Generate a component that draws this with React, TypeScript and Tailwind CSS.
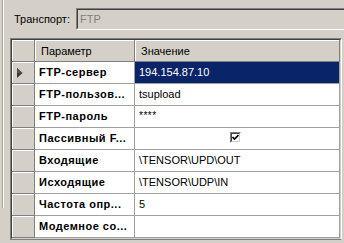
import React from "react";

type Row = { name: string; value?: string; selected?: boolean; check?: boolean; small?: boolean };

const rows: Row[] = [
  { name: "FTP-сервер", value: "194.154.87.10", selected: true },
  { name: "FTP-пользов...", value: "tsupload" },
  { name: "FTP-пароль", value: "****", small: true },
  { name: "Пассивный F...", check: true },
  { name: "Входящие", value: "\\TENSOR\\UPD\\OUT" },
  { name: "Исходящие", value: "\\TENSOR\\UDP\\IN" },
  { name: "Частота опр...", value: "5" },
  { name: "Модемное со...", value: "" },
];

function Arrow() {
  return (
    <svg width="6" height="10" viewBox="0 0 6 10">
      <polygon points="0,0 5.5,5 0,10" fill="#3a3a3a" />
      <polygon points="0,0 5.5,5 0,5" fill="#555" />
    </svg>
  );
}

function CheckBox() {
  return (
    <div className="w-[11px] h-[11px] border border-[#808080] border-b-white border-r-white -mt-[3px]">
      <div className="w-full h-full border border-[#404040] border-b-[#d4d0c8] border-r-[#d4d0c8] bg-white flex items-center justify-center">
        <svg width="7" height="7" viewBox="0 0 7 7">
          <path d="M0.5 3 L2.5 5 L6.5 1" stroke="#000" strokeWidth="1.6" fill="none" />
        </svg>
      </div>
    </div>
  );
}

export default function App() {
  return (
    <div className="relative w-[344px] h-[243px] bg-[#d4d0c8] overflow-hidden font-['Liberation_Sans',Arial,sans-serif] text-[11px] text-black">
      <div className="absolute left-[2px] top-0 h-[208px] w-[2px] border-l border-l-[#a8a5a0] border-r border-r-white" />
      <div className="flex items-center pt-[8px] pl-[14px]">
        <span className="w-[62px] shrink-0 leading-none">Транспорт:</span>
        <div className="h-[22px] flex-1 -mr-[4px] border border-[#808080] border-b-white border-r-white">
          <div className="h-full border border-[#404040] border-b-[#d4d0c8] border-r-[#d4d0c8] flex items-center pl-[2px] text-[#808080]">
            FTP
          </div>
        </div>
      </div>
      <div className="mt-[8px] ml-[10px] w-[332px] border border-[#808080] border-r-white">
        <div className="border border-[#404040] border-r-[#d4d0c8] border-b-[#d4d0c8]">
          <div className="grid grid-cols-[23px_100px_1fr]">
            <div className="h-[22px] bg-[#d4d0c8] border-r border-b border-[#808080] shadow-[inset_1px_1px_0_white]" />
            <div className="h-[22px] bg-[#d4d0c8] border-r border-b border-[#808080] shadow-[inset_1px_1px_0_white] flex items-center pl-[6px] pt-[1px]">
              Параметр
            </div>
            <div className="h-[22px] bg-[#d4d0c8] border-r border-b border-[#808080] shadow-[inset_1px_1px_0_white] flex items-center pl-[6px] pt-[1px]">
              Значение
            </div>
            {rows.map((r, i) => (
              <React.Fragment key={i}>
                <div className="h-[22px] bg-[#d4d0c8] border-r border-b border-[#808080] shadow-[inset_1px_1px_0_white] flex items-center pl-[5px]">
                  {i === 0 ? <Arrow /> : null}
                </div>
                <div className="h-[22px] bg-white border-r border-b border-[#a0a0a0] flex items-center pl-[4px] font-bold tracking-[0.5px] whitespace-nowrap overflow-hidden">
                  {r.name}
                </div>
                <div
                  className={
                    r.selected
                      ? "h-[22px] bg-[#0a246a] text-white border-r border-b border-[#a0a0a0] flex items-center pl-[4px] whitespace-nowrap overflow-hidden"
                      : r.check
                      ? "h-[22px] bg-white border-r border-b border-[#a0a0a0] flex items-center justify-center pr-[3px]"
                      : "h-[22px] bg-white border-r border-b border-[#a0a0a0] flex items-center pl-[4px] whitespace-nowrap overflow-hidden"
                  }
                >
                  {r.check ? <CheckBox /> : r.small ? <span className="text-[10px] -mt-[2px] tracking-[0.5px]">{r.value}</span> : r.value}
                </div>
              </React.Fragment>
            ))}
          </div>
        </div>
      </div>
    </div>
  );
}
